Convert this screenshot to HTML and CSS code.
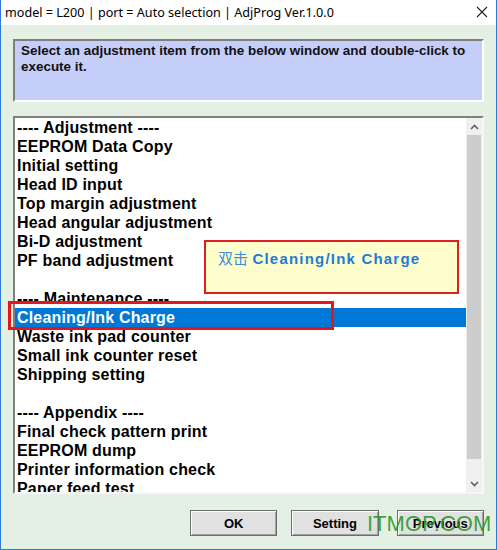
FILE: index.html
```html
<!DOCTYPE html>
<html lang="en">
<head>
    <meta charset="UTF-8">
    <title>AdjProg</title>
    <link rel="stylesheet" href="styles.css">
</head>
<body>
    <div class="window">
        <div class="titlebar">
            <span class="title">model = L200 | port = Auto selection | AdjProg Ver.1.0.0</span>
            <svg class="close" width="12" height="12" viewBox="0 0 12 12">
                <path d="M1 1 L11 11 M11 1 L1 11" stroke="#222" stroke-width="1.1" fill="none"/>
            </svg>
        </div>

        <div class="content">
            <div class="info">
                Select an adjustment item from the below window and double-click to execute it.
            </div>

            <div class="listbox">
                <ul class="items">
                    <li>---- Adjustment ----</li>
                    <li>EEPROM Data Copy</li>
                    <li>Initial setting</li>
                    <li>Head ID input</li>
                    <li>Top margin adjustment</li>
                    <li>Head angular adjustment</li>
                    <li>Bi-D adjustment</li>
                    <li>PF band adjustment</li>
                    <li>&nbsp;</li>
                    <li>---- Maintenance ----</li>
                    <li class="selected">Cleaning/Ink Charge</li>
                    <li>Waste ink pad counter</li>
                    <li>Small ink counter reset</li>
                    <li>Shipping setting</li>
                    <li>&nbsp;</li>
                    <li>---- Appendix ----</li>
                    <li>Final check pattern print</li>
                    <li>EEPROM dump</li>
                    <li>Printer information check</li>
                    <li>Paper feed test</li>
                </ul>
                <div class="scrollbar">
                    <div class="arrow">
                        <svg width="9" height="6" viewBox="0 0 9 6"><path d="M1 5 L4.5 1.5 L8 5" stroke="#606060" stroke-width="1.6" fill="none"/></svg>
                    </div>
                    <div class="thumb"></div>
                    <div class="track"></div>
                    <div class="arrow">
                        <svg width="9" height="6" viewBox="0 0 9 6"><path d="M1 1 L4.5 4.5 L8 1" stroke="#606060" stroke-width="1.6" fill="none"/></svg>
                    </div>
                </div>
            </div>

            <div class="buttons">
                <button>OK</button>
                <button>Setting</button>
                <button class="last">Previous</button>
            </div>
        </div>

        <!-- annotations drawn on top of the screenshot -->
        <div class="hint"><span class="cn">双击</span> <b>Cleaning/Ink Charge</b></div>
        <div class="mark"></div>
        <div class="watermark">ITMOP.COM</div>
    </div>
</body>
</html>
```

FILE: styles.css
```css
body {
    margin: 0;
    font-family: "Liberation Sans", Arial, sans-serif;
}
.window {
    position: relative;
    width: 497px;
    height: 550px;
    box-sizing: border-box;
    border: 1px solid #2b7bd3;
    border-top: none;
    background-color: #e3f0e3;
    display: flex;
    flex-direction: column;
    overflow: hidden;
}
.titlebar {
    height: 25px;
    flex: none;
    background-color: #fff;
    display: flex;
    align-items: center;
    justify-content: space-between;
    padding: 0 8px 0 4px;
}
.title {
    font-family: "Noto Sans", sans-serif;
    font-size: 12.6px;
    color: #000;
}
.close {
    margin-top: -2px;
}
.content {
    padding: 14px 12px 0 12px;
}
.info {
    height: 63px;
    box-sizing: border-box;
    background-color: #c5cdf9;
    border: 2px solid;
    border-color: #7f7f7f #fff #fff #7f7f7f;
    padding: 2px 6px 0 6px;
    font-size: 13.45px;
    font-weight: bold;
    line-height: 16px;
    color: #111;
}
.listbox {
    margin-top: 14px;
    height: 378px;
    box-sizing: border-box;
    background-color: #fff;
    border: 2px solid;
    border-color: #808080 #f7f7f7 #f7f7f7 #808080;
    display: flex;
}
.items {
    flex: 1;
    list-style: none;
    margin: 0;
    padding: 0;
    overflow: hidden;
}
.items li {
    font-size: 16px;
    font-weight: bold;
    line-height: 19px;
    height: 19px;
    padding-left: 2px;
    letter-spacing: 0.18px;
    white-space: nowrap;
    color: #000;
}
.items li.selected {
    background-color: #0078d7;
    color: #fff;
}
.scrollbar {
    width: 16px;
    flex: none;
    display: flex;
    flex-direction: column;
    background-color: #f0f0f0;
}
.arrow {
    height: 17px;
    display: flex;
    align-items: center;
    justify-content: center;
}
.thumb {
    height: 324px;
    margin: 0 1px;
    background-color: #cdcdcd;
}
.track {
    flex: 1;
}
.buttons {
    display: flex;
    gap: 14px;
    margin-top: 16px;
    padding-left: 177px;
}
button {
    width: 88px;
    height: 26px;
    font-family: "Liberation Sans", Arial, sans-serif;
    font-size: 13px;
    font-weight: bold;
    color: #000;
    background-color: #e1e1e1;
    border: 1px solid #6d6d6d;
    box-shadow: inset 1px 1px #fff, inset -1px -1px #a0a0a0;
    padding: 0;
}
button.last {
    margin-left: 4px;
}
.hint {
    position: absolute;
    left: 203px;
    top: 240px;
    width: 255px;
    height: 54px;
    box-sizing: border-box;
    border: 2px solid #dc1f1f;
    background-color: #ffffcd;
    padding: 7px 0 0 12px;
    line-height: 18px;
    color: #1e7bd6;
    white-space: nowrap;
}
.hint .cn {
    font-family: "Noto Sans CJK SC", sans-serif;
    font-size: 15px;
    color: #3b8ddb;
}
.hint b {
    font-size: 15px;
    letter-spacing: 1.2px;
}
.mark {
    position: absolute;
    left: 7px;
    top: 301px;
    width: 326px;
    height: 29px;
    box-sizing: border-box;
    border: 3px solid #e3161b;
}
.watermark {
    position: absolute;
    left: 366px;
    top: 509px;
    font-size: 22px;
    line-height: 30px;
    color: rgba(28, 150, 28, 0.85);
}
```
